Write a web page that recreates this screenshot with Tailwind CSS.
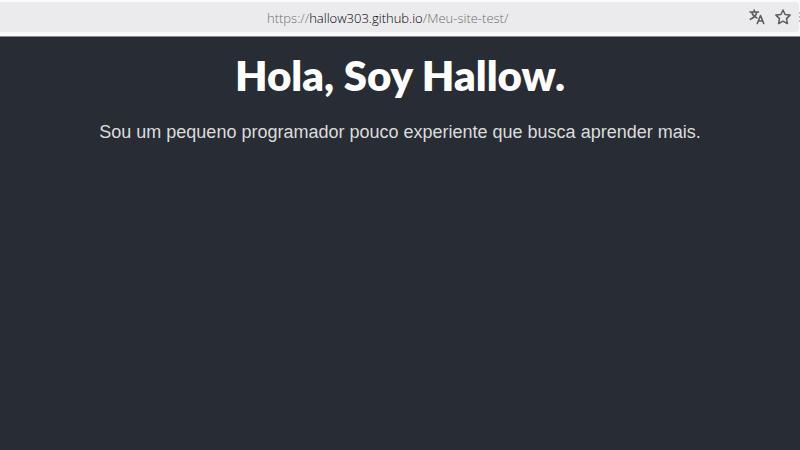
<!DOCTYPE html>
<html lang="pt-BR">
<head>
    <meta charset="UTF-8">
    <meta name="viewport" content="width=device-width, initial-scale=1.0">
    <title>Meu site test</title>
    <script src="https://cdn.jsdelivr.net/npm/@tailwindcss/browser@4"></script>
</head>
<body class="flex min-h-screen flex-col bg-[#282c34]">

    <!-- Barra de endereço -->
    <header class="flex items-center border-b border-[#8b8b8e] bg-[#f9f9fb] pt-0.5 pb-1">
        <div class="flex h-[30px] flex-1 items-center rounded-r bg-[#ebebed] pr-2">
            <div role="textbox" contenteditable="true" spellcheck="false" aria-label="Endereço" class="flex-1 pt-0.5 pl-[267px] font-['Open_Sans',sans-serif] text-[13px] leading-5 font-light whitespace-nowrap text-[#6c6c70] outline-none">https://<span class="text-black">hallow303.github.io</span>/Meu-site-test/</div>
            <div class="flex items-center gap-2.5">
                <button type="button" aria-label="Traduzir" class="text-[#5b5b61]">
                    <svg class="size-4" viewBox="0 0 16 16" fill="none" stroke="currentColor" stroke-width="1.6" stroke-linecap="round" stroke-linejoin="round">
                        <path d="M1 3h8.5M5.2 1v2M2.7 3.2c.8 2.6 2.6 4.5 5.2 5.7M7.8 3.2C7 6.3 4.8 8.8 1.3 10.3"/>
                        <path d="M8.3 14.5l3.2-8 3.2 8M9.4 12h4.2"/>
                    </svg>
                </button>
                <button type="button" aria-label="Adicionar aos favoritos" class="text-[#5b5b61]">
                    <svg class="size-4" viewBox="0 0 16 16" fill="none" stroke="currentColor" stroke-width="1.5" stroke-linejoin="round">
                        <path d="M8 1l2.1 4.5 5 .6-3.6 3.5.9 5L8 12.2l-4.4 2.4.9-5L.9 6.100l5-.6z"/>
                    </svg>
                </button>
            </div>
        </div>
        <div class="flex w-px flex-col gap-0.5">
            <span class="h-0.5 w-px bg-[#b5b5b8]"></span>
            <span class="h-0.5 w-px bg-[#b5b5b8]"></span>
            <span class="h-0.5 w-px bg-[#b5b5b8]"></span>
        </div>
    </header>

    <!-- Conteúdo -->
    <main class="flex flex-col items-center gap-5 px-4 pt-3 text-center">
        <h1 class="font-['Lato',sans-serif] text-[42px] leading-[52px] font-extrabold text-white">Hola, Soy Hallow.</h1>
        <p class="font-['Liberation_Sans',Arial,sans-serif] text-lg leading-[22px] text-[#dcdcdc]">Sou um pequeno programador pouco experiente que busca aprender mais.</p>
    </main>

</body>
</html>
